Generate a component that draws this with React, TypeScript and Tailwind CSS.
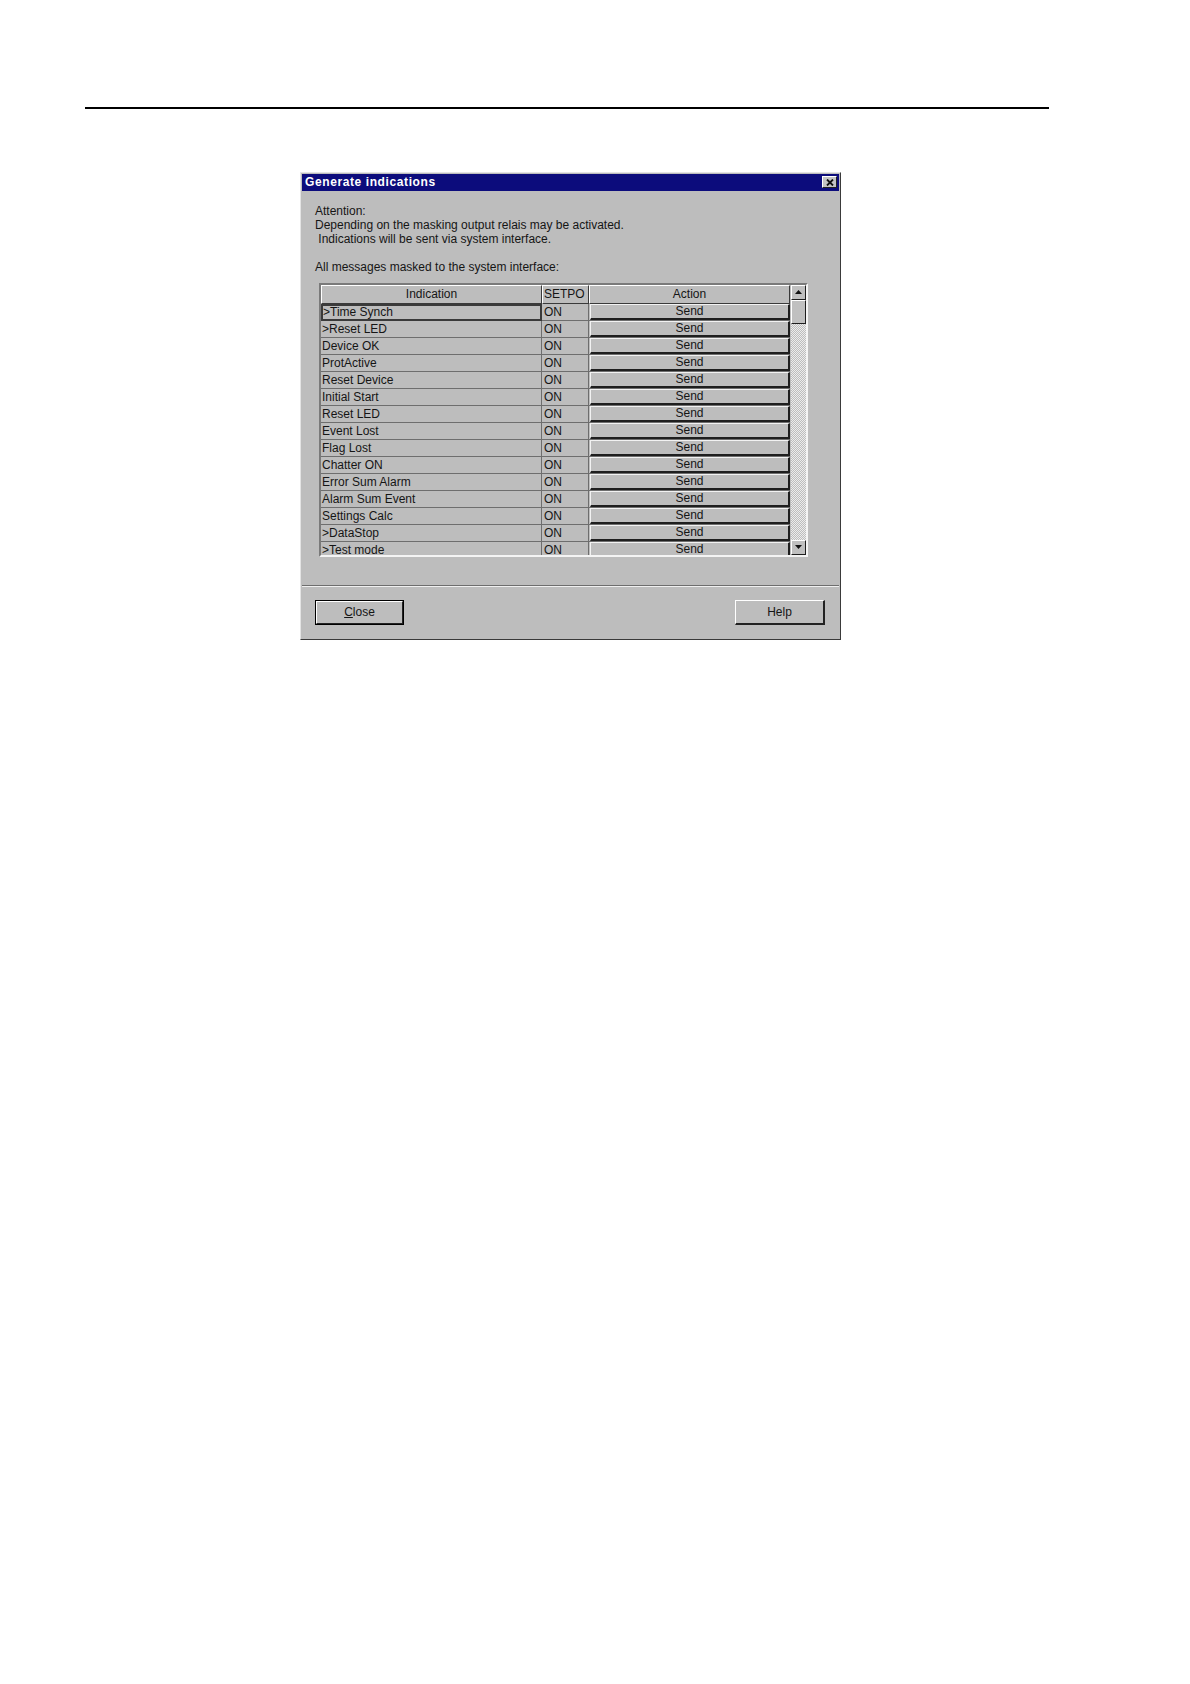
import React from 'react';

// rows shown in the indication grid
const rows = [
  '>Time Synch',
  '>Reset LED',
  'Device OK',
  'ProtActive',
  'Reset Device',
  'Initial Start',
  'Reset LED',
  'Event Lost',
  'Flag Lost',
  'Chatter ON',
  'Error Sum Alarm',
  'Alarm Sum Event',
  'Settings Calc',
  '>DataStop',
  '>Test mode',
];

function Arrow({ down }: { down?: boolean }) {
  return (
    <svg width="7" height="4" viewBox="0 0 7 4" className={down ? 'rotate-180' : ''}>
      <polygon points="3.5,0 7,4 0,4" fill="#111" />
    </svg>
  );
}

export default function App() {
  return (
    <div className="w-[1190px] h-[1684px] bg-white overflow-hidden font-['Liberation_Sans',Arial,sans-serif] text-[12px] text-[#151515]">
      {/* page header rule */}
      <div className="mt-[107px] ml-[85px] w-[964px] h-[1.5px] bg-black" />

      {/* dialog */}
      <div className="mt-[63px] ml-[300px] w-[541px] h-[468px] bg-[#bdbdbd] border border-t-[#e4e4e4] border-l-[#e4e4e4] border-r-[#3a3a3a] border-b-[#3a3a3a] p-[1px] flex flex-col">
        {/* title bar */}
        <div className="h-[17px] bg-[#0c0c7c] flex items-center justify-between pl-[3px] pr-[2px]">
          <span className="text-white font-bold text-[12px] leading-none tracking-[0.6px]">Generate indications</span>
          <div className="w-[15px] h-[12px] bg-[#c4c4c4] border border-t-white border-l-white border-r-[#222] border-b-[#222] flex items-center justify-center">
            <svg width="8" height="7" viewBox="0 0 8 7">
              <path d="M1 0.5 L7 6.5 M7 0.5 L1 6.5" stroke="#111" strokeWidth="1.8" />
            </svg>
          </div>
        </div>

        {/* message */}
        <div className="pl-[13px] pt-[13px] leading-[14px]">
          <div>Attention:</div>
          <div>Depending on the masking output relais may be activated.</div>
          <div>&nbsp;Indications will be sent via system interface.</div>
          <div>&nbsp;</div>
          <div>All messages masked to the system interface:</div>
        </div>

        {/* grid */}
        <div className="ml-[17px] mt-[9px] w-[489px] h-[274px] border-2 border-t-[#7a7a7a] border-l-[#7a7a7a] border-r-[#f4f4f4] border-b-[#f4f4f4] flex">
          <div className="flex-1 overflow-hidden">
            {/* header */}
            <div className="flex h-[19px]">
              <div className="w-[221px] border border-t-white border-l-white border-r-[#3a3a3a] border-b-[#3a3a3a] flex items-center justify-center">
                Indication
              </div>
              <div className="w-[47px] border border-t-white border-l-white border-r-[#3a3a3a] border-b-[#3a3a3a] flex items-center pl-[1px] overflow-hidden whitespace-nowrap">
                SETPO
              </div>
              <div className="flex-1 border border-t-white border-l-white border-r-[#3a3a3a] border-b-[#3a3a3a] flex items-center justify-center">
                Action
              </div>
            </div>
            {/* data rows */}
            {rows.map((name, i) => (
              <div key={i} className="flex h-[17px]">
                <div
                  className={
                    i === 0
                      ? 'w-[221px] border-2 border-[#3a3a3a] flex items-center whitespace-nowrap'
                      : 'w-[221px] border-r border-b border-[#6e6e6e] flex items-center pl-[1px] whitespace-nowrap'
                  }
                >
                  {name}
                </div>
                <div className="w-[47px] border-r border-b border-[#6e6e6e] flex items-center pl-[2px]">ON</div>
                <div className="flex-1 border-b border-[#6e6e6e] pl-[1px]">
                  <div className="h-full border border-t-[#f2f2f2] border-l-[#f2f2f2] border-r-[#1e1e1e] border-b-[#1e1e1e] border-b-2 border-r-2 flex items-center justify-center">
                    Send
                  </div>
                </div>
              </div>
            ))}
          </div>

          {/* vertical scrollbar */}
          <div className="w-[16px] flex flex-col border-l border-[#bdbdbd]">
            <div className="h-[15px] bg-[#c0c0c0] border border-t-white border-l-white border-r-[#1e1e1e] border-b-[#1e1e1e] flex items-center justify-center">
              <Arrow />
            </div>
            <div className="h-[24px] bg-[#c0c0c0] border border-t-white border-l-white border-r-[#1e1e1e] border-b-[#1e1e1e]" />
            <div className="flex-1 bg-[repeating-conic-gradient(#ececec_0_25%,#bdbdbd_0_50%)] bg-[length:2px_2px]" />
            <div className="h-[15px] bg-[#c0c0c0] border border-t-white border-l-white border-r-[#1e1e1e] border-b-[#1e1e1e] flex items-center justify-center">
              <Arrow down />
            </div>
          </div>
        </div>

        {/* separator */}
        <div className="mt-[28px] h-[2px] border-t border-t-[#6e6e6e] border-b border-b-[#f0f0f0]" />

        {/* buttons */}
        <div className="flex justify-between pl-[13px] pr-[14px] mt-[13px]">
          <button className="w-[89px] h-[25px] border border-black bg-[#bdbdbd]">
            <div className="h-full border border-t-white border-l-white border-r-[#222] border-b-[#222] flex items-center justify-center">
              <span>
                <span className="underline">C</span>lose
              </span>
            </div>
          </button>
          <button className="w-[90px] h-[25px] bg-[#bdbdbd] border border-t-white border-l-white border-r-[#222] border-b-[#222] border-b-2 border-r-2 flex items-center justify-center">
            Help
          </button>
        </div>
      </div>
    </div>
  );
}
